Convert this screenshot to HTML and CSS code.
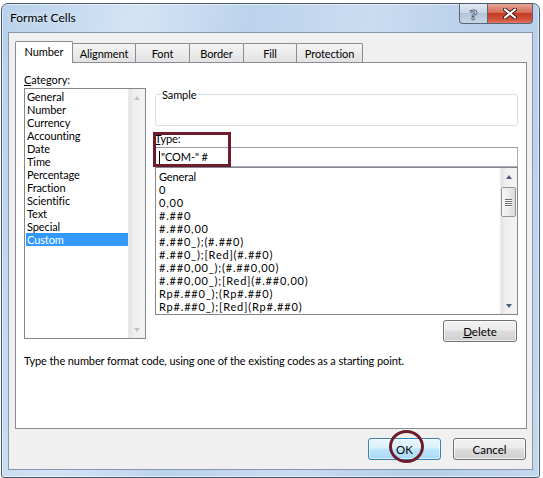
FILE: index.html
```html
<!DOCTYPE html>
<html lang="en">

<head>
    <meta charset="UTF-8">
    <meta name="viewport" content="width=device-width, initial-scale=1.0">
    <title>Format Cells</title>
    <link rel="stylesheet" href="styles.css">
</head>

<body>
    <div class="window">
        <div class="titlebar">
            <span class="title">Format Cells</span>
            <div class="caption">
                <button class="cap help">?</button>
                <button class="cap close">
                    <svg width="14" height="11" viewBox="0 0 14 11">
                        <path d="M2 1.5 L12 9.5 M12 1.5 L2 9.5" stroke="#3b1a14" stroke-width="4" stroke-linecap="round" />
                        <path d="M2 1.5 L12 9.5 M12 1.5 L2 9.5" stroke="#fff" stroke-width="2.2" stroke-linecap="round" />
                    </svg>
                </button>
            </div>
        </div>

        <div class="client">
            <div class="tabs">
                <div class="tab active" style="width:58px">Number</div>
                <div class="tab" style="width:64px">Alignment</div>
                <div class="tab" style="width:55px">Font</div>
                <div class="tab" style="width:55px">Border</div>
                <div class="tab" style="width:54px">Fill</div>
                <div class="tab" style="width:67px">Protection</div>
            </div>

            <div class="panel">
                <div class="panel-grid">
                    <div class="col-cat">
                        <div class="label"><u>C</u>ategory:</div>
                        <div class="listbox cat-list">
                            <ul class="items">
                                <li>General</li>
                                <li>Number</li>
                                <li>Currency</li>
                                <li>Accounting</li>
                                <li>Date</li>
                                <li>Time</li>
                                <li>Percentage</li>
                                <li>Fraction</li>
                                <li>Scientific</li>
                                <li>Text</li>
                                <li>Special</li>
                                <li class="sel">Custom</li>
                            </ul>
                            <div class="vscroll disabled">
                                <div class="arrow up"></div>
                                <div class="track"></div>
                                <div class="arrow down"></div>
                            </div>
                        </div>
                    </div>

                    <div class="col-type">
                        <fieldset class="sample">
                            <legend>Sample</legend>
                        </fieldset>
                        <div class="label type-label"><u>T</u>ype:</div>
                        <div class="type-input"><span class="caret"></span>"COM-" #</div>
                        <div class="listbox fmt-list">
                            <ul class="items">
                                <li>General</li>
                                <li>0</li>
                                <li>0,00</li>
                                <li>#.##0</li>
                                <li>#.##0,00</li>
                                <li>#.##0_);(#.##0)</li>
                                <li>#.##0_);[Red](#.##0)</li>
                                <li>#.##0,00_);(#.##0,00)</li>
                                <li>#.##0,00_);[Red](#.##0,00)</li>
                                <li>Rp#.##0_);(Rp#.##0)</li>
                                <li>Rp#.##0_);[Red](Rp#.##0)</li>
                            </ul>
                            <div class="vscroll">
                                <div class="arrow up"></div>
                                <div class="track">
                                    <div class="thumb">
                                        <span></span><span></span><span></span><span></span>
                                    </div>
                                </div>
                                <div class="arrow down"></div>
                            </div>
                        </div>
                        <div class="delete-row">
                            <button class="btn"><u>D</u>elete</button>
                        </div>
                    </div>
                </div>
                <p class="hint">Type the number format code, using one of the existing codes as a starting point.</p>
            </div>

            <div class="footer">
                <button class="btn default">OK</button>
                <button class="btn">Cancel</button>
            </div>
        </div>

        <!-- annotation marks drawn over the dialog -->
        <div class="mark-rect"></div>
        <div class="mark-circle"></div>
    </div>
</body>

</html>
```

FILE: styles.css
```css
* {
    margin: 0;
    padding: 0;
    box-sizing: border-box;
}

body {
    background-color: #fff;
    font-family: Lato, "Noto Sans", sans-serif;
    font-size: 11px;
    letter-spacing: -0.1px;
    color: #000;
}

.window {
    position: relative;
    width: 539px;
    height: 475px;
    margin: 3px 0 0 1px;
    border: 1px solid #4b5a6b;
    border-radius: 7px 7px 3px 3px;
    background: linear-gradient(100deg, #b8d0ea 0%, #d4e4f5 22%, #bcd3ec 40%, #c9dcf1 60%, #b6cee8 80%, #c4d8ee 100%);
    box-shadow: inset 0 0 0 1px rgba(255, 255, 255, .55);
    padding: 0 6px 7px;
    display: flex;
    flex-direction: column;
}

.titlebar {
    height: 28px;
    display: flex;
    align-items: center;
}

.title {
    padding-left: 2px;
    padding-bottom: 1px;
    font-size: 12px;
    letter-spacing: 0;
    color: #000;
    text-shadow: 0 0 6px rgba(255, 255, 255, .9);
}

.caption {
    margin-left: auto;
    align-self: flex-start;
    display: flex;
}

.cap {
    height: 20px;
    border: 1px solid #55667c;
    border-top: none;
    font-family: inherit;
    display: flex;
    align-items: center;
    justify-content: center;
}

.help {
    width: 28px;
    border-right: none;
    border-radius: 0 0 0 4px;
    background: linear-gradient(#e2eaf3, #c9d6e5 45%, #b3c4d8 50%, #c8d6e6);
    font-family: "Noto Sans", sans-serif;
    font-size: 15px;
    font-weight: bold;
    color: #f4f7fa;
    -webkit-text-stroke: 1px #56677c;
}

.close {
    width: 46px;
    border-radius: 0 0 4px 0;
    background: linear-gradient(#e9a596, #d66c58 45%, #c23b25 50%, #d4553f 85%, #e07a63);
}

.client {
    flex: 1;
    background-color: #f0f0f0;
    border: 1px solid #8497ad;
    padding: 8px 5px 0 6px;
}

.tabs {
    display: flex;
    align-items: flex-end;
    height: 21px;
    position: relative;
    z-index: 1;
}

.tab {
    height: 19px;
    margin-left: -1px;
    border: 1px solid #898c95;
    border-bottom: none;
    border-radius: 2px 2px 0 0;
    background: linear-gradient(#f4f4f4, #ececec 50%, #e2e2e2);
    display: flex;
    align-items: center;
    justify-content: center;
    padding-top: 1px;
}

.tab.active {
    margin-left: 0;
    height: 22px;
    margin-bottom: -1px;
    background: #fff;
    position: relative;
    z-index: 2;
    padding-top: 0;
    padding-bottom: 2px;
}

.panel {
    width: 512px;
    height: 367px;
    background-color: #fff;
    border: 1px solid #898c95;
    padding: 9px 7px 0 8px;
}

.panel-grid {
    display: grid;
    grid-template-columns: 122px 363px;
    column-gap: 9px;
    align-items: start;
}

.label {
    line-height: 15px;
}

.listbox {
    border: 1px solid #828790;
    background-color: #fff;
    display: flex;
    overflow: hidden;
}

.cat-list {
    margin-top: 1px;
    height: 251px;
}

.items {
    flex: 1;
    list-style: none;
    overflow: hidden;
}

.items li {
    line-height: 13px;
    white-space: nowrap;
}

.cat-list .items {
    padding: 1px 0 0 1px;
}

.cat-list .items li {
    padding-left: 1px;
}

.items li.sel {
    background-color: #3399ff;
    color: #fff;
}

.vscroll {
    width: 17px;
    display: flex;
    flex-direction: column;
    background: linear-gradient(to right, #e3e3e3, #efefef 30%, #f4f4f4);
    border-left: 1px solid #eaeaea;
}

.vscroll .track {
    flex: 1;
}

.arrow {
    height: 17px;
    display: flex;
    align-items: center;
    justify-content: center;
}

.arrow::after {
    content: "";
    border-left: 3.5px solid transparent;
    border-right: 3.5px solid transparent;
}

.arrow.up::after {
    border-bottom: 4px solid #4e5e7a;
}

.arrow.down::after {
    border-top: 4px solid #4e5e7a;
}

.disabled .arrow.up::after {
    border-bottom-color: #c4c4c4;
}

.disabled .arrow.down::after {
    border-top-color: #c4c4c4;
}

.thumb {
    margin: 2px 1px 0 0;
    height: 30px;
    border: 1px solid #979797;
    border-radius: 2px;
    background: linear-gradient(to right, #f6f6f6, #ebebeb 50%, #d9d9d9);
    display: flex;
    flex-direction: column;
    align-items: center;
    justify-content: center;
    gap: 1px;
}

.thumb span {
    width: 7px;
    height: 1px;
    background-color: #6f6f6f;
    box-shadow: 0 1px 0 #fff;
}

.sample {
    margin-top: 16px;
    height: 38px;
    border: 1px solid #d5dfe5;
    border-radius: 3px;
    padding: 0 5px;
}

.sample legend {
    padding: 0 1px;
    line-height: 13px;
}

.type-label {
    margin-top: 6px;
    line-height: 13px;
}

.type-input {
    margin-top: 2px;
    height: 20px;
    border: 1px solid #abadb3;
    border-top-color: #9a9ca3;
    background-color: #fff;
    padding-left: 3px;
    line-height: 18px;
    display: flex;
    align-items: center;
}

.caret {
    width: 1px;
    height: 13px;
    background-color: #000;
    margin-right: 1px;
}

.fmt-list {
    height: 148px;
}

.fmt-list .items {
    padding: 2px 0 0 3px;
}

.fmt-list li:not(:first-child) {
    letter-spacing: 0.8px;
}

.delete-row {
    margin-top: 5px;
    display: flex;
    justify-content: flex-end;
    padding-right: 1px;
}

.btn {
    width: 74px;
    height: 22px;
    font-family: inherit;
    font-size: 11.5px;
    color: #000;
    border: 1px solid #707070;
    border-radius: 3px;
    background: linear-gradient(#f2f2f2, #ebebeb 45%, #dddddd 50%, #cfcfcf);
    box-shadow: inset 0 0 0 1px rgba(255, 255, 255, .7);
    cursor: pointer;
}

.hint {
    margin-top: 12px;
    line-height: 13px;
}

.footer {
    margin-top: 9px;
    display: flex;
    justify-content: flex-end;
    gap: 12px;
    padding-right: 1px;
}

.footer .btn {
    width: 73px;
}

.btn.default {
    border-color: #3c7fb1;
    background: linear-gradient(#eaf6fd, #d9f0fc 45%, #bee6fd 50%, #a7d9f5);
    box-shadow: inset 0 0 0 1px rgba(255, 255, 255, .6);
}

.mark-rect {
    position: absolute;
    left: 151px;
    top: 128px;
    width: 78px;
    height: 35px;
    border: 3px solid #6e1b2c;
}

.mark-circle {
    position: absolute;
    left: 387px;
    top: 426px;
    width: 35px;
    height: 33px;
    border: 3px solid #6e1b2c;
    border-radius: 50%;
}
```
